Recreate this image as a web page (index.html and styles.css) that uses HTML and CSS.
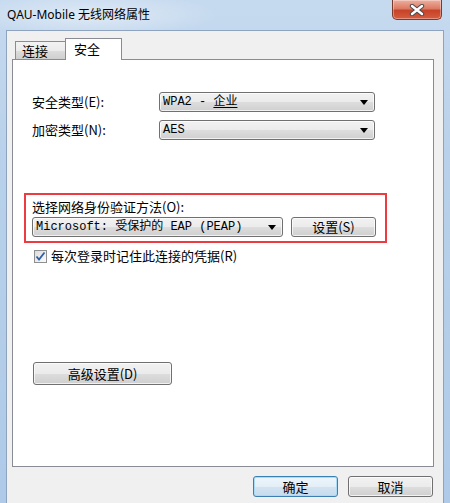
FILE: index.html
```html
<!DOCTYPE html>
<html lang="zh-CN">
  <head>
    <meta charset="UTF-8" />
    <meta name="viewport" content="width=device-width, initial-scale=1.0" />
    <title>QAU-Mobile 无线网络属性</title>
    <link rel="stylesheet" href="styles.css">
  </head>
  <body>
    <div class="window">
      <div class="titlebar">
        <span class="title">QAU-Mobile 无线网络属性</span>
        <div class="close-btn">
          <svg width="16" height="12" viewBox="0 0 16 12">
            <path d="M3 2 L13 10 M13 2 L3 10" stroke="#4a4a4a" stroke-width="4.4" stroke-linecap="round" />
            <path d="M3 2 L13 10 M13 2 L3 10" stroke="#ffffff" stroke-width="2.4" stroke-linecap="round" />
          </svg>
        </div>
      </div>

      <div class="client">
        <div class="tabs">
          <div class="tab">连接</div>
          <div class="tab active">安全</div>
        </div>

        <div class="panel">
          <div class="form-rows">
            <span class="label">安全类型(E):</span>
            <div class="combo">
              <span class="combo-text">WPA2 - <u>企业</u></span>
              <span class="arrow"></span>
            </div>
            <span class="label">加密类型(N):</span>
            <div class="combo">
              <span class="combo-text">AES</span>
              <span class="arrow"></span>
            </div>
          </div>

          <div class="auth-box">
            <div class="label">选择网络身份验证方法(O):</div>
            <div class="auth-row">
              <div class="combo auth-combo">
                <span class="combo-text">Microsoft: 受保护的 EAP (PEAP)</span>
                <span class="arrow"></span>
              </div>
              <button class="btn settings-btn">设置(S)</button>
            </div>
          </div>

          <label class="check-row">
            <span class="checkbox">
              <svg width="11" height="11" viewBox="0 0 11 11">
                <path d="M1.5 5.5 L4 8.5 L9.5 1.5" fill="none" stroke="#2d5fa8" stroke-width="1.8" />
              </svg>
            </span>
            <span class="label">每次登录时记住此连接的凭据(R)</span>
          </label>

          <button class="btn advanced-btn">高级设置(D)</button>
        </div>

        <div class="footer">
          <button class="btn default-btn">确定</button>
          <button class="btn">取消</button>
        </div>
      </div>
    </div>
  </body>
</html>
```

FILE: styles.css
```css
* {
  margin: 0;
  padding: 0;
  box-sizing: border-box;
}

body {
  width: 450px;
  height: 503px;
  overflow: hidden;
  font-family: "Noto Sans CJK SC", "Liberation Sans", sans-serif;
  font-size: 12px;
  color: #000;
}

.window {
  height: 503px;
  background: linear-gradient(to bottom, #c6daef 0%, #b9d1ea 30%, #aecae8 100%);
  display: flex;
  flex-direction: column;
  padding: 0 6px 0 6px;
}

.titlebar {
  height: 30px;
  display: flex;
  align-items: flex-start;
  justify-content: space-between;
  background: radial-gradient(ellipse 130px 22px at 90px 15px, rgba(255,255,255,0.45), rgba(255,255,255,0) 100%);
  margin: 0 -6px;
  padding: 0 8px 0 7px;
}

.title {
  font-family: "Noto Sans", "Noto Sans CJK SC", sans-serif;
  font-size: 12px;
  line-height: 30px;
  color: #000;
}

.close-btn {
  width: 50px;
  height: 20px;
  display: flex;
  align-items: center;
  justify-content: center;
  border: 1px solid #7b3a2c;
  border-top: 0;
  border-radius: 0 0 5px 5px;
  background: linear-gradient(to bottom, #eeaf9f 0%, #dc7a63 45%, #c7432a 55%, #d65c3c 100%);
  box-shadow: inset 0 0 0 1px rgba(255,255,255,0.35);
}

.client {
  flex: 1;
  background: #f0f0f0;
  border: 1px solid #8ea3be;
  border-bottom: 0;
  padding: 7px 9px 0 5px;
  display: flex;
  flex-direction: column;
}

.tabs {
  display: flex;
  align-items: flex-end;
  height: 21px;
  padding-left: 3px;
}

.tab {
  height: 18px;
  width: 51px;
  padding: 0 0 0 6px;
  line-height: 17px;
  font-size: 13px;
  border: 1px solid #898c95;
  border-bottom: 0;
  background: linear-gradient(to bottom, #f3f3f3 0%, #ebebeb 50%, #dddddd 51%, #cfcfcf 100%);
}

.tab.active {
  height: 22px;
  width: 57px;
  margin-left: -1px;
  margin-bottom: -1px;
  padding-left: 8px;
  line-height: 19px;
  background: #fff;
  position: relative;
  z-index: 1;
}

.panel {
  height: 408px;
  background: #fff;
  border: 1px solid #898c95;
  padding: 32px 0 0 11px;
}

.label {
  font-size: 13px;
  line-height: 16px;
  white-space: nowrap;
}

.form-rows {
  display: grid;
  grid-template-columns: 127px 216px;
  row-gap: 8px;
  align-items: center;
  margin-left: 8px;
}

.combo {
  height: 20px;
  display: flex;
  align-items: center;
  border: 1px solid #707070;
  border-radius: 3px;
  background: linear-gradient(to bottom, #f2f2f2 0%, #ebebeb 50%, #dddddd 51%, #cfcfcf 100%);
  box-shadow: inset 0 0 0 1px rgba(255,255,255,0.7);
  padding: 0 6px 0 3px;
}

.combo-text {
  flex: 1;
  font-family: "Liberation Mono", "Noto Sans CJK SC", monospace;
  font-size: 12px;
  white-space: nowrap;
  line-height: 18px;
}

.combo-text u {
  text-underline-offset: 2px;
}

.arrow {
  width: 0;
  height: 0;
  border-left: 4px solid transparent;
  border-right: 4px solid transparent;
  border-top: 5px solid #000;
}

.auth-box {
  width: 363px;
  margin-top: 53px;
  border: 2px solid #ed3b42;
  padding: 4px 0 4px 6px;
}

.auth-box .label {
  margin-bottom: 2px;
  line-height: 16px;
}

.auth-row {
  display: flex;
  gap: 8px;
}

.auth-combo {
  width: 251px;
}

.btn {
  font-family: "Noto Sans CJK SC", "Liberation Sans", sans-serif;
  font-size: 13px;
  color: #000;
  height: 21px;
  width: 85px;
  border: 1px solid #707070;
  border-radius: 3px;
  background: linear-gradient(to bottom, #f2f2f2 0%, #ebebeb 50%, #dddddd 51%, #cfcfcf 100%);
  box-shadow: inset 0 0 0 1px rgba(255,255,255,0.7);
  line-height: 18px;
}

.settings-btn {
  height: 20px;
}

.check-row {
  display: flex;
  align-items: center;
  gap: 4px;
  margin: 5px 0 0 10px;
}

.checkbox {
  width: 13px;
  height: 13px;
  border: 1px solid #8e8f8f;
  background: linear-gradient(135deg, #dcdcdc, #fbfbfb);
  display: flex;
  align-items: center;
  justify-content: center;
}

.advanced-btn {
  display: block;
  width: 139px;
  height: 23px;
  margin: 98px 0 0 9px;
}

.footer {
  display: flex;
  justify-content: flex-end;
  gap: 10px;
  margin-top: 9px;
  padding-right: 1px;
}

.default-btn {
  border-color: #3c7fb1;
  background: linear-gradient(to bottom, #eef6fc 0%, #e3eef7 50%, #d3e3f1 51%, #c6dcee 100%);
  box-shadow: inset 0 0 0 1px #a9dbf6;
}
```
